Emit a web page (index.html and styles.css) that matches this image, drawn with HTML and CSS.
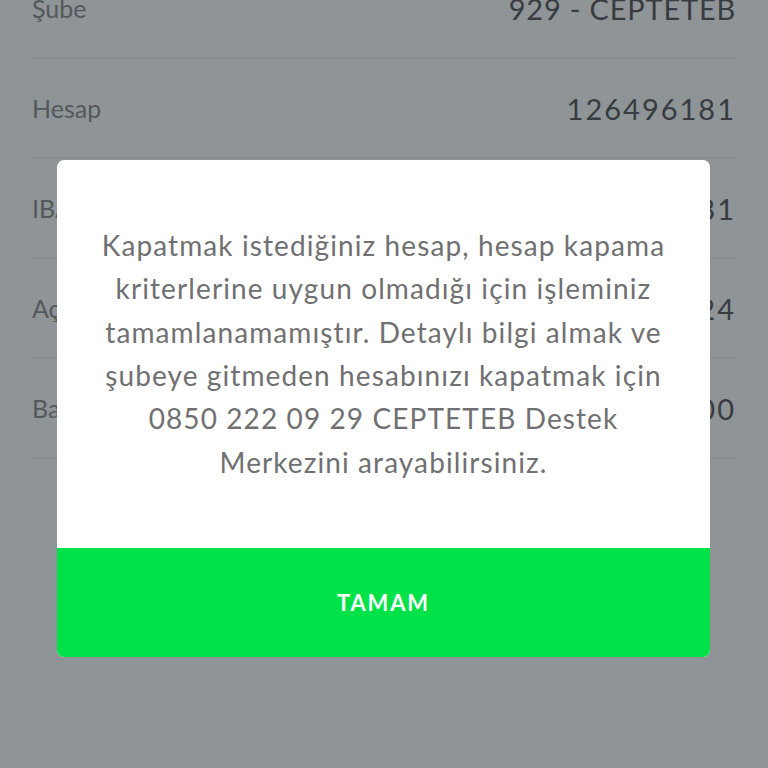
FILE: index.html
```html
<!DOCTYPE html>
<html lang="tr">
<head>
<meta charset="utf-8">
<link rel="stylesheet" href="styles.css">
</head>
<body>
<div class="screen">
  <ul class="details">
    <li class="row"><span class="label">Şube</span><span class="value">929 - CEPTETEB</span></li>
    <li class="row"><span class="label">Hesap</span><span class="value num">126496181</span></li>
    <li class="row"><span class="label">IBAN</span><span class="value num">TR55 0003 2000 0000 0126 4961 81</span></li>
    <li class="row"><span class="label">Açılış Tarihi</span><span class="value num">15.03.2024</span></li>
    <li class="row"><span class="label">Bakiye</span><span class="value num">0,00</span></li>
  </ul>
  <div class="dialog">
    <div class="dialog-body">
      <p class="message">Kapatmak istediğiniz hesap, hesap kapama<br>kriterlerine uygun olmadığı için işleminiz<br>tamamlanamamıştır. Detaylı bilgi almak ve<br>şubeye gitmeden hesabınızı kapatmak için<br>0850 222 09 29 CEPTETEB Destek<br>Merkezini arayabilirsiniz.</p>
    </div>
    <button class="dialog-button">TAMAM</button>
  </div>
</div>
</body>
</html>
```

FILE: styles.css
```css
* { box-sizing: border-box; }
html, body {
  margin: 0;
  padding: 0;
  width: 768px;
  height: 768px;
  overflow: hidden;
  background: #8f9497;
}
.screen {
  position: relative;
  display: flow-root;
  width: 768px;
  height: 768px;
  font-family: Lato, "Open Sans", sans-serif;
}
.details {
  list-style: none;
  margin: -41px 32px 0 32px;
  padding: 0;
}
.row {
  display: flex;
  justify-content: space-between;
  align-items: center;
  height: 100px;
  border-bottom: 2px solid #878b8e;
  white-space: nowrap;
  overflow: hidden;
}
.label {
  font-size: 25px;
  color: #53585c;
}
.value {
  font-size: 29px;
  color: #383c40;
  letter-spacing: 0.8px;
}
.value.num {
  letter-spacing: 2px;
}
.dialog {
  position: absolute;
  left: 57px;
  top: 160px;
  width: 653px;
  height: 497px;
  background: #ffffff;
  border-radius: 7px;
  overflow: hidden;
  display: flex;
  flex-direction: column;
}
.dialog-body {
  flex: 1;
  display: flex;
  align-items: center;
  justify-content: center;
}
.message {
  margin: 0;
  text-align: center;
  font-size: 28px;
  letter-spacing: 1.1px;
  line-height: 43.3px;
  color: #707072;
  white-space: nowrap;
}
.dialog-button {
  height: 109px;
  border: 0;
  background: #00e248;
  color: #ffffff;
  font-family: Lato, sans-serif;
  font-weight: 700;
  font-size: 22px;
  letter-spacing: 1.8px;
  padding: 0;
}
```
